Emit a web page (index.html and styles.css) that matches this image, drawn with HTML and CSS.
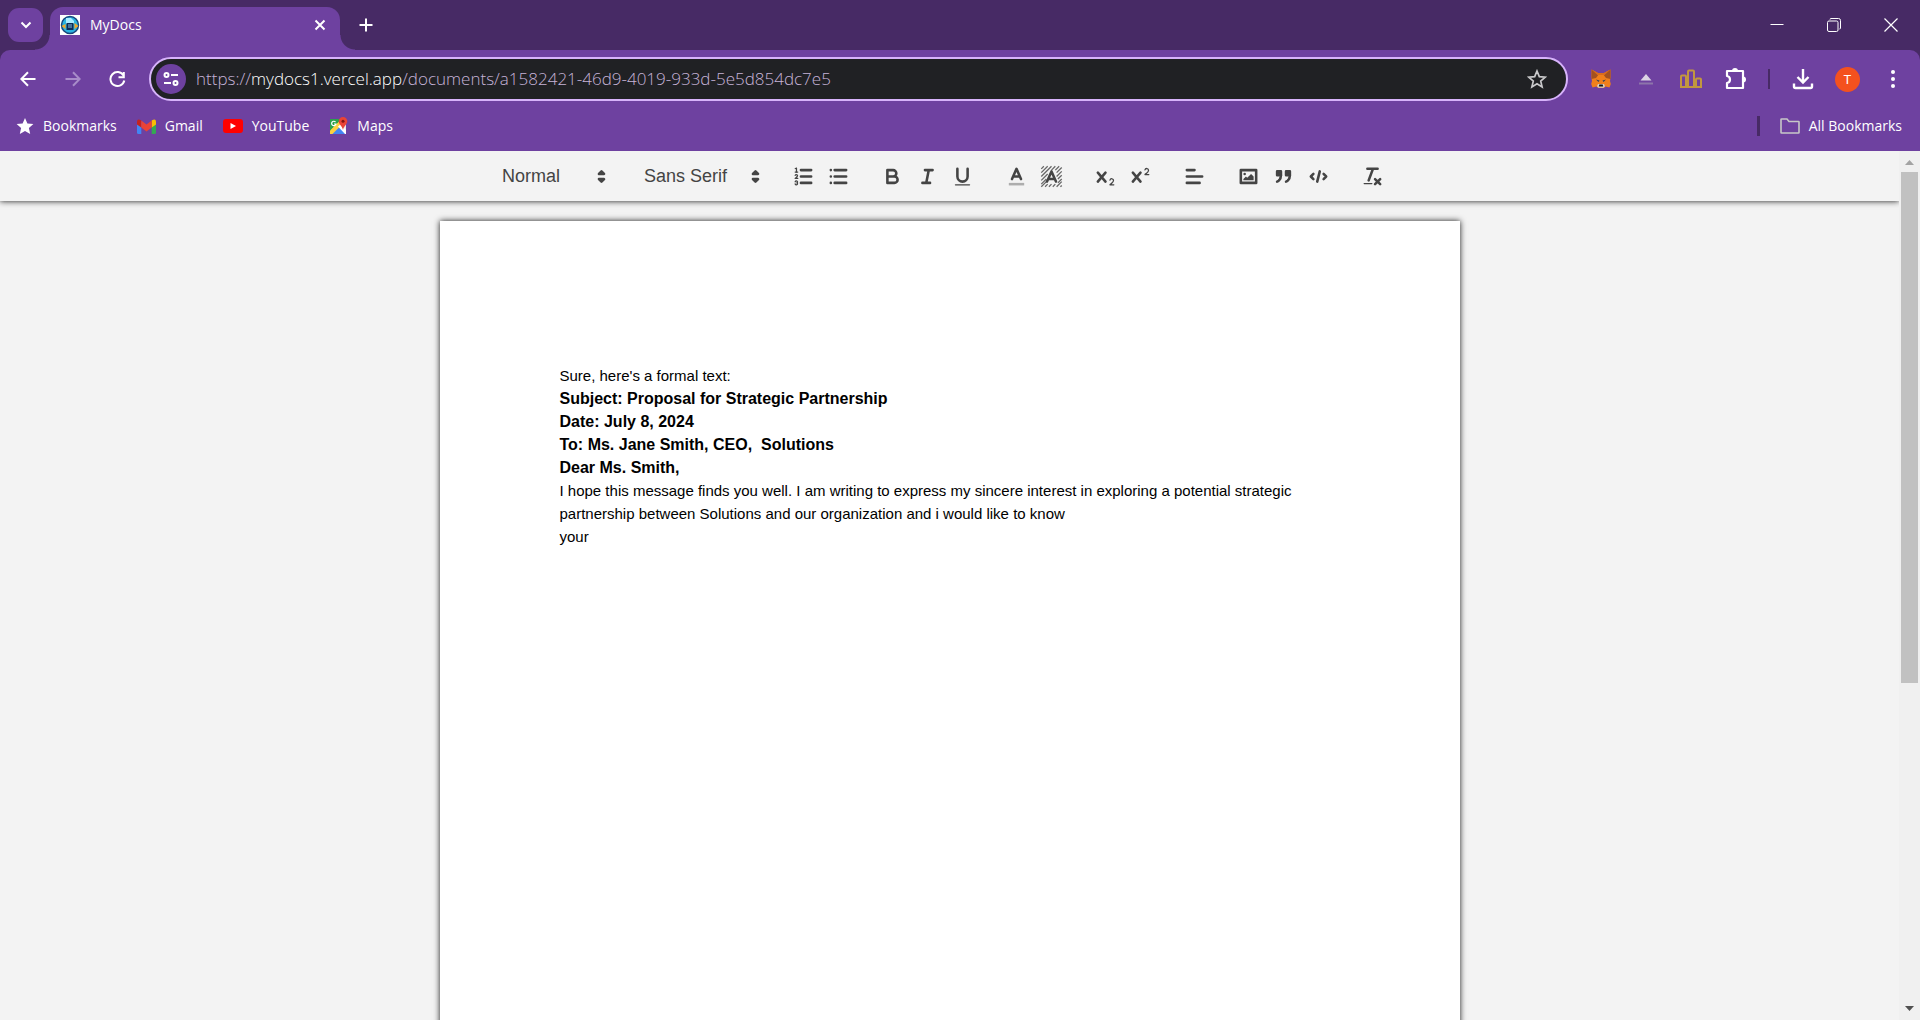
FILE: index.html
```html
<!DOCTYPE html>
<html lang="en">
<head>
<meta charset="utf-8">
<title>MyDocs</title>
<link rel="stylesheet" href="styles.css">
</head>
<body>
<div class="browser">
  <header class="chrome">
    <div class="tabstrip">
      <button class="tab-search" aria-label="Search tabs"><svg width="12" height="8" viewBox="0 0 12 8"><path d="M1.500 1.500 6 6l4.500-4.500" fill="none" stroke="#fff" stroke-width="2"/></svg></button>
      <div class="tab">
        <svg width="20" height="20" viewBox="0 0 20 20"><path fill="#fff" d="M0 0h20v20H0z"/><circle cx="10" cy="10" r="8.500" fill="#2bb3e0" stroke="#17457c" stroke-width="1.500"/><path d="M1.500 11l4-2v5zM18.500 11l-4-3v6z" fill="#f5a623"/><path d="M6 3h5l3 3v3H6z" fill="#a9ecff"/><path d="M6.500 8h7v7h-7z" fill="#0d2c55"/><path d="M8 10h4M8 12h4" stroke="#7fb9e6"/></svg>
        <span class="tab-title">MyDocs</span>
        <button class="icon-btn" aria-label="Close tab"><svg width="12" height="12" viewBox="0 0 12 12"><path d="M1.500 1.500l9 9M10.500 1.500l-9 9" stroke="#fff" stroke-width="2"/></svg></button>
      </div>
      <button class="new-tab" aria-label="New tab"><svg width="14" height="14" viewBox="0 0 14 14"><path d="M7 .5v13M.5 7h13" stroke="#fff" stroke-width="2"/></svg></button>
      <div class="window-controls">
        <button aria-label="Minimize"><svg width="14" height="14" viewBox="0 0 14 14"><path d="M.5 6.500h13" stroke="#fff"/></svg></button>
        <button aria-label="Restore"><svg width="14" height="14" viewBox="0 0 14 14" fill="none" stroke="#fff"><rect x=".5" y="3" width="10.500" height="10.500" rx="1.500"/><path d="M3 1.500Q3 .5 4 .5h7.500q2 0 2 2V10q0 1-1 1" /></svg></button>
        <button aria-label="Close"><svg width="14" height="14" viewBox="0 0 14 14"><path d="M.5.5l13 13M13.500.5l-13 13" stroke="#fff" stroke-width="1.200"/></svg></button>
      </div>
    </div>
    <div class="toolbar-wrap">
      <div class="nav-row">
        <nav class="nav-buttons" aria-label="History">
          <button class="icon-btn" aria-label="Back"><svg width="16" height="16" viewBox="0 0 16 16"><path d="M15.500 8H1.500M8 1.200 1.300 8 8 14.800" fill="none" stroke="#fff" stroke-width="2"/></svg></button>
          <button class="icon-btn" aria-label="Forward"><svg width="16" height="16" viewBox="0 0 16 16"><path d="M.5 8h14M8 1.200 14.700 8 8 14.800" fill="none" stroke="#a88cc9" stroke-width="2"/></svg></button>
          <button class="icon-btn" aria-label="Reload"><svg width="17" height="17" viewBox="0 0 17 17"><path d="M14.500 4.500A7 7 0 1 0 15.300 9.500" fill="none" stroke="#fff" stroke-width="2"/><path d="M14.800 1v5.300H9.500" fill="none" stroke="#fff" stroke-width="2"/></svg></button>
        </nav>
        <div class="omnibox">
          <button class="site-info" aria-label="View site information"><svg width="16" height="14" viewBox="0 0 16 14" fill="none" stroke="#fff" stroke-width="2"><circle cx="3.500" cy="3" r="2"/><path d="M8 3h7M1 11h7"/><circle cx="12.500" cy="11" r="2"/></svg></button>
          <div class="url" role="textbox" aria-label="Address" contenteditable="true" spellcheck="false">https://<span class="host">mydocs1.vercel.app</span>/documents/a1582421-46d9-4019-933d-5e5d854dc7e5</div>
          <button class="icon-btn" aria-label="Bookmark this tab"><svg width="20" height="20" viewBox="0 0 20 20"><path d="M10 2l2.300 5.600 6 .5-4.600 3.900 1.400 5.900L10 14.700l-5.100 3.200 1.400-5.900L1.700 8.100l6-.5z" fill="none" stroke="#c9c9cb" stroke-width="1.700"/></svg></button>
        </div>
        <div class="extensions">
          <button class="icon-btn" aria-label="MetaMask"><svg width="20" height="20" viewBox="0 0 20 20"><path d="M.5.5 7 4h6l6.500-3.500v8L19 12l.8 3-1.300 3.500-4-1L13 19H7l-1.500-1.500-4 1L.2 15l.8-3-.5-3.500z" fill="#f07f1b"/><path d="M.5.5 8 5 5 9l-4.500 1zM19.500.5 12 5l3 4 4.500 1z" fill="#a3511f"/><path d="M.5.5 7 4h6l6.500-3.500L13.500 6h-7z" fill="#d96c1c"/><path d="M5 10.500l3.500 1-1 1.500zM15 10.500l-3.500 1 1 1.500z" fill="#33405a"/><path d="M7 15h6l1 2.200-1.500 1.600h-5L6 17.200z" fill="#d8cfc6"/><path d="M8.300 15.500h3.400l.5 2H7.800z" fill="#161616"/></svg></button>
          <button class="icon-btn" aria-label="Extension"><svg width="14" height="11" viewBox="0 0 14 11"><path d="M7 0l5.500 6.500h-11z" fill="#dcd3e4"/><path d="M0 9.500h14" stroke="#8d75aa" stroke-width="2"/></svg></button>
          <button class="icon-btn" aria-label="Leaderboard"><svg width="22" height="20" viewBox="0 0 22 20" fill="none" stroke="#c2973f" stroke-width="2"><path d="M1 18V7.500Q1 6.500 2 6.500h3q1 0 1 1V18M8 18V2.500Q8 1.500 9 1.500h4q1 0 1 1V18M16 18v-7.500q0-1 1-1h3q1 0 1 1V18M0 18h22"/></svg></button>
          <button class="icon-btn" aria-label="Extensions"><svg width="22" height="22" viewBox="0 0 22 22"><path d="M2 3h16v17H2v-5c4-.5 4-6.500 0-7z" fill="none" stroke="#fff" stroke-width="2.200" stroke-linejoin="round"/><path d="M7 3a3 3 0 0 1 6 0zM18 8.500a3 3 0 0 1 0 6z" fill="#fff"/></svg></button>
        </div>
        <span class="divider"></span>
        <div class="extensions">
          <button class="icon-btn" aria-label="Downloads"><svg width="22" height="22" viewBox="0 0 22 22" fill="none" stroke="#fff" stroke-width="2.400"><path d="M11 1v13M5.500 9l5.500 5.500L16.500 9M2 15.500v3q0 1.500 1.500 1.500h15q1.500 0 1.500-1.500v-3"/></svg></button>
          <button class="icon-btn" aria-label="Profile"><span class="avatar">T</span></button>
          <button class="icon-btn" aria-label="Menu"><svg width="6" height="20" viewBox="0 0 6 20" fill="#fff"><circle cx="3" cy="3" r="2"/><circle cx="3" cy="10" r="2"/><circle cx="3" cy="17" r="2"/></svg></button>
        </div>
      </div>
      <nav class="bookmarks" aria-label="Bookmarks">
        <a href="#"><svg width="18" height="18" viewBox="0 0 18 18"><path d="M9 1l2.400 5.500 6 .6-4.500 4 1.300 5.900L9 13.900 3.800 17l1.300-5.900-4.500-4 6-.6z" fill="#fff"/></svg>Bookmarks</a>
        <a href="#"><svg width="19" height="15" viewBox="0 0 19 15"><path d="M0 3h4.300v12H1.500Q0 15 0 13.500z" fill="#4285f4"/><path d="M14.700 3H19v10.500q0 1.500-1.500 1.500h-2.800z" fill="#34a853"/><path d="M14.700 1.500Q19-1 19 3v2.500l-4.300 3z" fill="#fbbc04"/><path d="M0 3Q0-1 4.300 1.500v7L0 5.500z" fill="#c5221f"/><path d="M4.300 1.500l5.200 4 5.200-4v7l-5.200 4-5.200-4z" fill="#ea4335"/></svg>Gmail</a>
        <a href="#"><svg width="20" height="14" viewBox="0 0 20 14"><rect width="20" height="14" rx="3" fill="#f00"/><path d="M7.500 4v6l5.500-3z" fill="#fff"/></svg>YouTube</a>
        <a href="#"><svg width="19" height="18" viewBox="0 0 19 18"><path d="M1 2h16v13q0 2-2 2H2Q1 17 1 16z" fill="#2ba24c"/><path d="M10 8l7-3v12z" fill="#e8e8e8"/><path d="M2 17l7.500-7.500L17 17z" fill="#4285f4"/><path d="M1 13.500 10.500 4l3 3L3.500 17H1z" fill="#fdd13f"/><path d="M1 13l9-9-1-2H1z" fill="#2ba24c"/><path d="M9 9.500l7 7.500h1v-4l-5-6z" fill="#fff"/><path d="M6.500 5A2.200 2.200 0 1 0 7 7H5" fill="none" stroke="#fff" stroke-width="1.200"/><path d="M14 0a4.300 4.300 0 0 1 4.300 4.300c0 3-3.500 4.700-4.300 8.700-.8-4-4.300-5.700-4.300-8.700A4.300 4.300 0 0 1 14 0z" fill="#ea4335"/><circle cx="14" cy="4.300" r="1.500" fill="#811411"/></svg>Maps</a>
        <span class="divider divider-bookmarks"></span>
        <a class="all" href="#"><svg width="20" height="16" viewBox="0 0 20 16"><path d="M1 14.500v-13Q1 1 1.500 1H7l2 2.500h9.500q.5 0 .5.500v10.500q0 .5-.5.5h-17q-.5 0-.5-.5z" fill="none" stroke="#c7c7c7" stroke-width="1.600"/></svg>All Bookmarks</a>
      </nav>
    </div>
  </header>

  <div class="viewport">
    <main class="app">
      <div class="editor-toolbar" role="toolbar" aria-label="Formatting">
        <span class="group picker header-picker">
          <select aria-label="Paragraph style"><option>Normal</option></select>
          <svg class="q" viewBox="0 0 18 18"><path class="f s" d="M7 11l2 2 2-2zM7 7l2-2 2 2z"/></svg>
        </span>
        <span class="group picker font-picker">
          <select aria-label="Font"><option>Sans Serif</option></select>
          <svg class="q" viewBox="0 0 18 18"><path class="f s" d="M7 11l2 2 2-2zM7 7l2-2 2 2z"/></svg>
        </span>
        <span class="group">
          <button aria-label="Ordered list"><svg class="q" viewBox="0 0 18 18"><path class="s" d="M7 4h8M7 9h8M7 14h8"/><path class="s thin" d="M2.500 5.500h2M4.500 10.500h-2c0-.234 1.850-1.076 1.850-2.234A.959.959 0 0 0 2.500 8.156M2.500 14.846a.959.959 0 0 0 1.850-.109A.7.7 0 0 0 3.750 14a.688.688 0 0 0 .6-.736.959.959 0 0 0-1.850-.109"/><path class="f" d="M3.500 6A.5.5 0 0 1 3 5.500V3.085l-.276.138A.5.5 0 0 1 2.053 3c-.124-.247-.023-.324.224-.447l1-.5A.5.5 0 0 1 4 2.500v3A.5.5 0 0 1 3.500 6z"/></svg></button>
          <button aria-label="Bullet list"><svg class="q" viewBox="0 0 18 18"><path class="s" d="M6 4h9M6 9h9M6 14h9M3 4h.01M3 9h.01M3 14h.01"/></svg></button>
        </span>
        <span class="group">
          <button aria-label="Bold"><svg class="q" viewBox="0 0 18 18"><path class="s" d="M5 4h4.500A2.500 2.500 0 0 1 9.500 9H5zM5 9h5.500a2.500 2.500 0 0 1 0 5H5z"/></svg></button>
          <button aria-label="Italic"><svg class="q" viewBox="0 0 18 18"><path class="s" d="M7 4h6M5 14h6M8 14l2-10"/></svg></button>
          <button aria-label="Underline"><svg class="q" viewBox="0 0 18 18"><path class="s" d="M5 3v6a4 4 0 0 0 8 0V3"/><rect class="f" height="1" rx=".5" width="12" x="3" y="15"/></svg></button>
        </span>
        <span class="group">
          <button aria-label="Text color"><svg class="q" viewBox="0 0 18 18"><path class="s faint" d="M3 15h12"/><path class="s" d="M5.500 11 9 3l3.500 8M11.630 9H6.380"/></svg></button>
          <button aria-label="Background color"><svg class="q" viewBox="0 0 18 18"><path class="s hatch" d="M1 3l2-2M1 6l5-5M1 9l8-8M1 12 6 7M9 4l3-3M1 15l4-4M12 4l3-3M1 17l4-4M13 6l4-4M4 17l2-2M13 9l4-4M7 17l2-2M14 11l3-3M10 17l2-2M14 14l3-3M13 17l4-4M16 17l1-1"/><path class="s" d="M5.500 13 9 5l3.500 8M11.630 11H6.380"/></svg></button>
        </span>
        <span class="group">
          <button aria-label="Subscript"><svg class="q" viewBox="0 0 18 18"><path class="f" d="M15.500 15H13.861a3.858 3.858 0 0 0 1.914-2.975 1.800 1.800 0 0 0-1.600-1.751A1.921 1.921 0 0 0 12.021 11.700a.5.5 0 1 0 .957.291 .914.914 0 0 1 1.053-.725.810.810 0 0 1 .744.762c0 1.076-1.170 1.870-1.940 2.431A1.456 1.456 0 0 0 12 15.500a.5.5 0 0 0 .5.500h3a.5.5 0 0 0 0-1z"/><path class="s" d="M3 6l6 7M9 6l-6 7"/></svg></button>
          <button aria-label="Superscript"><svg class="q" viewBox="0 0 18 18"><path class="f" transform="translate(0 -8)" d="M15.500 15H13.861a3.858 3.858 0 0 0 1.914-2.975 1.800 1.800 0 0 0-1.600-1.751A1.921 1.921 0 0 0 12.021 11.700a.5.5 0 1 0 .957.291 .914.914 0 0 1 1.053-.725.810.810 0 0 1 .744.762c0 1.076-1.170 1.870-1.940 2.431A1.456 1.456 0 0 0 12 15.500a.5.5 0 0 0 .5.500h3a.5.5 0 0 0 0-1z"/><path class="s" d="M3 6l6 7M9 6l-6 7"/></svg></button>
        </span>
        <span class="group">
          <button aria-label="Align"><svg class="q" viewBox="0 0 18 18"><path class="s" d="M3 9h12M3 14h10M3 4h6"/></svg></button>
        </span>
        <span class="group">
          <button aria-label="Image"><svg class="q" viewBox="0 0 18 18"><rect class="s" height="10" width="12" x="3" y="4"/><circle class="f" cx="6" cy="7" r="1"/><path class="f" d="M5 12v-1l2-2 1 1 3-3 2 2v3z"/></svg></button>
          <button aria-label="Quote"><svg class="q" viewBox="0 0 18 18"><path class="f s" d="M4 5h3v3H4zM11 5h3v3h-3z"/><path class="f s" d="M7 8c0 4.031-3 5-3 5M14 8c0 4.031-3 5-3 5"/></svg></button>
          <button aria-label="Code block"><svg class="q" viewBox="0 0 18 18"><path class="s" d="M5 7 3 9l2 2M13 7l2 2-2 2M10 5 8 13"/></svg></button>
        </span>
        <span class="group">
          <button aria-label="Clear formatting"><svg class="q" viewBox="0 0 18 18"><path class="s" d="M5 3h8M6 12 9.350 3M11 11l4 4M15 11l-4 4"/><rect class="f" height="1" rx=".5" width="7" x="2" y="14"/></svg></button>
        </span>
      </div>
      <article class="paper" contenteditable="true" spellcheck="false">
        <p>Sure, here's a formal text:</p>
        <p><strong>Subject: Proposal for Strategic Partnership</strong></p>
        <p><strong>Date: July 8, 2024</strong></p>
        <p><strong>To: Ms. Jane Smith, CEO,&nbsp; Solutions</strong></p>
        <p><strong>Dear Ms. Smith,</strong></p>
        <p>I hope this message finds you well. I am writing to express my sincere interest in exploring a potential strategic partnership between Solutions and our organization and i would like to know</p>
        <p>your</p>
      </article>
    </main>
    <div class="scrollbar" aria-hidden="true">
      <svg width="9" height="5" viewBox="0 0 9 5"><path d="M4.500 0 9 5H0z" fill="#a3a3a3"/></svg>
      <div class="track"><div class="thumb"></div></div>
      <svg width="9" height="5" viewBox="0 0 9 5"><path d="M4.500 5 9 0H0z" fill="#505050"/></svg>
    </div>
  </div>
</div>
</body>
</html>
```
FILE: styles.css
```css
* { box-sizing: border-box; }
body { margin: 0; background: #f3f3f3; }
button {
  display: flex; align-items: center; justify-content: center;
  padding: 0; border: 0; background: none; color: inherit; font: inherit;
}
svg { display: block; flex: none; }

.browser { display: flex; flex-direction: column; height: 100vh; overflow: hidden; }

.chrome {
  flex: none; background: #472a65; color: #fff;
  font: 400 14px/20px "Open Sans", "Noto Sans", sans-serif;
}
.tabstrip { display: flex; align-items: center; height: 50px; padding-left: 8px; }
.tab-search { width: 35px; height: 34px; border-radius: 11px; background: #6e41a0; }
.tab {
  position: relative; display: flex; align-items: center; align-self: flex-end;
  width: 290px; height: 43px; margin-left: 7px; padding: 0 10px 7px;
  border-radius: 13px 13px 0 0; background: #6e41a0;
}
.tab::before, .tab::after { content: ""; position: absolute; bottom: 0; width: 15px; height: 15px; }
.tab::before { right: 100%; background: radial-gradient(circle at 0 0, transparent 14px, #6e41a0 15px); }
.tab::after { left: 100%; background: radial-gradient(circle at 100% 0, transparent 14px, #6e41a0 15px); }
.tab-title { flex: 1; margin-left: 10px; }
.tab .icon-btn { width: 20px; height: 20px; }
.new-tab { width: 35px; height: 35px; margin-left: 8px; }
.window-controls { display: flex; margin-left: auto; padding-right: 1px; }
.window-controls button { width: 57px; height: 50px; }

.toolbar-wrap { height: 101px; border-radius: 10px 10px 0 0; background: #6e41a0; }
.nav-row { display: flex; align-items: center; height: 58px; padding: 0 5px; }
.nav-buttons, .extensions { display: flex; }
.nav-row .icon-btn { width: 45px; height: 35px; }
.omnibox {
  flex: 1; display: flex; align-items: center; min-width: 0; height: 44px;
  margin: 0 10px 0 9px; padding: 0 0 0 5px;
  border: 2px solid #d7b3fb; border-radius: 22px; background: #202124;
}
.omnibox .site-info { width: 30px; height: 30px; border-radius: 50%; background: #6e41a0; flex: none; }
.omnibox .icon-btn { width: 58px; flex: none; }
.url {
  flex: 1; min-width: 0; margin-left: 10px; overflow: hidden; white-space: nowrap;
  color: #c6b3d8; font-size: 17px; font-weight: 300; line-height: 24px;
}
.host { color: #fff; }
.avatar {
  width: 25px; height: 25px; border-radius: 50%; background: #f4511e;
  font: 400 13px/25px Roboto, sans-serif; text-align: center;
}
.divider { width: 2px; height: 20px; margin: 0 10px; background: #472a65; flex: none; }
.bookmarks { display: flex; align-items: center; gap: 20px; height: 36px; padding: 0 18px 0 16px; }
.bookmarks a { display: flex; align-items: center; gap: 9px; color: #fff; text-decoration: none; }
.bookmarks .divider-bookmarks { width: 3px; margin: 0 0 0 auto; }

.viewport { display: flex; flex: 1; min-height: 0; }
.app { flex: 1; min-width: 0; overflow: hidden; background: #f3f3f3; }
.editor-toolbar {
  display: flex; justify-content: center; align-items: center; height: 50px;
  background: #f3f3f3; box-shadow: 0 0 6px 0 rgba(0, 0, 0, .9); color: #444;
}
.group { display: flex; margin-right: 19px; flex: none; }
.group button { width: 35px; height: 30px; }
.picker { display: grid; align-items: center; }
.picker > * { grid-area: 1 / 1; }
.picker .q { justify-self: end; pointer-events: none; }
.header-picker { width: 123px; }
.font-picker { width: 135px; }
.picker select {
  appearance: none; width: 100%; height: 30px; padding: 0 0 0 12px; border: 0;
  background: none; color: #444; font: 500 18px/30px "Liberation Sans", Arial, sans-serif;
}
.q { width: 23px; height: 23px; }
.s { fill: none; stroke: #444; stroke-width: 2; stroke-linecap: round; stroke-linejoin: round; }
.s.f { fill: #444; }
.thin { stroke-width: 1; }
.hatch { stroke-width: 1; stroke-linecap: butt; opacity: .8; }
.faint { opacity: .4; stroke-linecap: butt; }
.f { fill: #444; }

.paper {
  width: 1020px; max-width: 100%; min-height: 1320px; margin: 20px auto 0; padding: 143px 120px;
  background: #fff; box-shadow: 0 0 6px 0 rgba(0, 0, 0, .9); color: #000;
  font: 15px/23px "Liberation Sans", Arial, sans-serif;
}
.paper p { margin: 0; }
.paper strong { display: block; font-size: 16px; }

.scrollbar {
  display: flex; flex-direction: column; align-items: center; justify-content: space-between;
  width: 21px; padding: 9px 2px; background: #f0f0f0;
}
.track { flex: 1; width: 17px; margin: 7px 0 10px; }
.thumb { height: 62%; background: #c1c1c1; }
```
